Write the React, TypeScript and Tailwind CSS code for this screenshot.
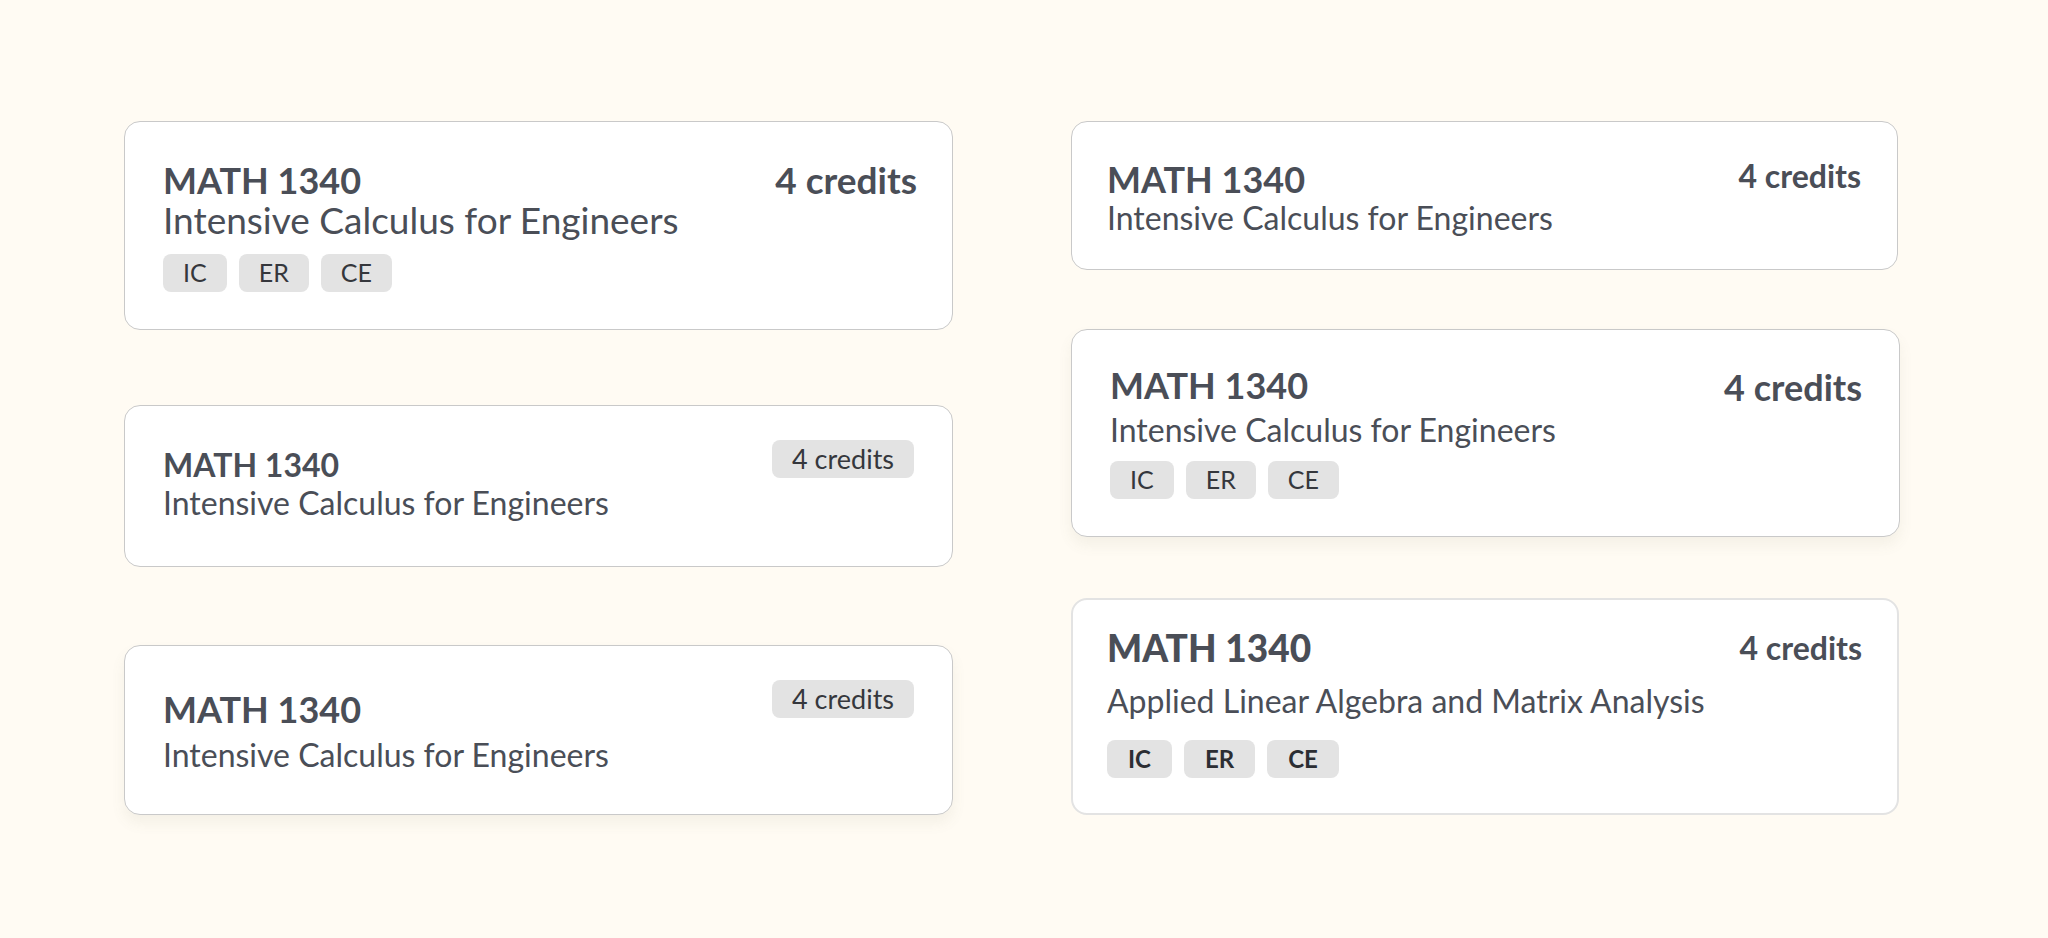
const FONT = "font-['Lato','Noto_Sans',sans-serif]";

function Chip({ label, bold = false }: { label: string; bold?: boolean }) {
  return (
    <span
      className={`inline-flex h-[38px] items-center justify-center rounded-[8px] bg-[#e3e3e3] ${
        bold ? "px-[21px] text-[24px] font-bold text-[#2c2e33]" : "px-[20px] text-[25px] text-[#35373c]"
      }`}
    >
      {label}
    </span>
  );
}

function Chips({ bold = false }: { bold?: boolean }) {
  return (
    <div className="flex gap-[12px]">
      {["IC", "ER", "CE"].map((c) => (
        <Chip key={c} label={c} bold={bold} />
      ))}
    </div>
  );
}

function CreditPill() {
  return (
    <span className="inline-flex h-[38px] items-center rounded-[8px] bg-[#e3e3e3] px-[20px] text-[27px] text-[#35373c]">
      4 credits
    </span>
  );
}

export default function App() {
  return (
    <div className={`min-h-[938px] w-full bg-[#fffbf3] ${FONT} text-[#4a4e57]`}>
      <div className="flex gap-[118px] pl-[124px] pt-[121px]">
        {/* left column */}
        <div className="flex w-[829px] flex-col">
          <div className="h-[209px] rounded-[16px] border border-[#c9c9c9] bg-white pl-[38px] pr-[35px] pt-[38px]">
            <div className="flex items-start justify-between">
              <div>
                <div className="text-[36px] font-bold leading-[40px]">MATH 1340</div>
                <div className="text-[37px] leading-[40px]">Intensive Calculus for Engineers</div>
              </div>
              <div className="text-[37px] font-bold leading-[40px]">4 credits</div>
            </div>
            <div className="mt-[14px]">
              <Chips />
            </div>
          </div>

          <div className="mt-[75px] h-[162px] rounded-[16px] border border-[#c9c9c9] bg-white pl-[38px] pr-[38px] pt-[34px]">
            <div className="flex items-start justify-between">
              <div className="pt-[6px]">
                <div className="text-[32px] font-bold leading-[38px]">MATH 1340</div>
                <div className="text-[32px] leading-[38px]">Intensive Calculus for Engineers</div>
              </div>
              <CreditPill />
            </div>
          </div>

          <div className="mt-[78px] h-[170px] rounded-[16px] border border-[#c9c9c9] bg-white pl-[38px] pr-[38px] pt-[34px] shadow-[0_8px_14px_rgba(120,110,90,0.08)]">
            <div className="flex items-start justify-between">
              <div className="pt-[9px]">
                <div className="text-[36px] font-bold leading-[40px]">MATH 1340</div>
                <div className="mt-[7px] text-[32px] leading-[38px]">Intensive Calculus for Engineers</div>
              </div>
              <CreditPill />
            </div>
          </div>
        </div>

        {/* right column */}
        <div className="flex w-[829px] flex-col">
          <div className="h-[149px] w-[827px] rounded-[16px] border border-[#c9c9c9] bg-white pl-[35px] pr-[36px] pt-[37px]">
            <div className="flex items-start justify-between">
              <div>
                <div className="text-[36px] font-bold leading-[40px]">MATH 1340</div>
                <div className="text-[32px] leading-[38px]">Intensive Calculus for Engineers</div>
              </div>
              <div className="text-[32px] font-bold leading-[34px]">4 credits</div>
            </div>
          </div>

          <div className="mt-[59px] h-[208px] rounded-[16px] border border-[#c9c9c9] bg-white pl-[38px] pr-[37px] pt-[35px] shadow-[0_8px_14px_rgba(120,110,90,0.08)]">
            <div className="flex items-start justify-between">
              <div>
                <div className="text-[36px] font-bold leading-[40px]">MATH 1340</div>
                <div className="mt-[6px] text-[32px] leading-[38px]">Intensive Calculus for Engineers</div>
              </div>
              <div className="text-[36px] font-bold leading-[44px]">4 credits</div>
            </div>
            <div className="mt-[12px]">
              <Chips />
            </div>
          </div>

          <div className="mt-[61px] h-[217px] w-[828px] rounded-[16px] border-2 border-[#e3e3e3] bg-white pl-[34px] pr-[35px] pt-[28px]">
            <div className="flex items-start justify-between">
              <div>
                <div className="text-[37px] font-black leading-[40px]">MATH 1340</div>
                <div className="mt-[14px] text-[32px] leading-[38px]">
                  Applied Linear Algebra and Matrix Analysis
                </div>
              </div>
              <div className="text-[32px] font-bold leading-[40px]">4 credits</div>
            </div>
            <div className="mt-[20px]">
              <Chips bold />
            </div>
          </div>
        </div>
      </div>
    </div>
  );
}
